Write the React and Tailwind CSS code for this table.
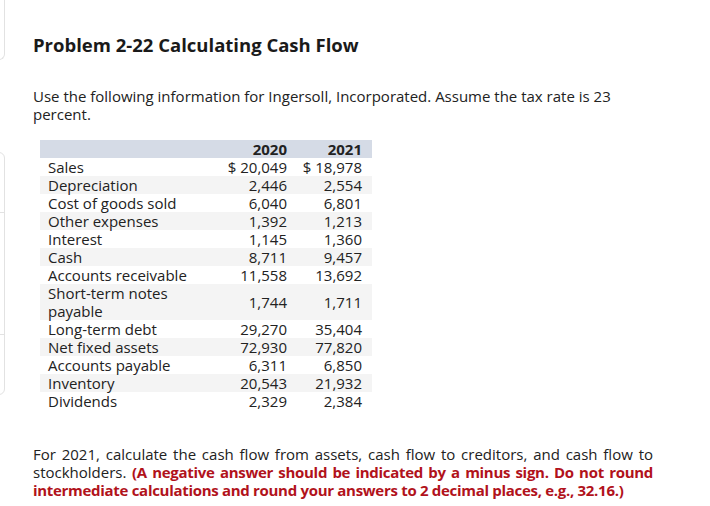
const rows = [
  ["Sales", "$ 20,049", "$ 18,978"],
  ["Depreciation", "2,446", "2,554"],
  ["Cost of goods sold", "6,040", "6,801"],
  ["Other expenses", "1,392", "1,213"],
  ["Interest", "1,145", "1,360"],
  ["Cash", "8,711", "9,457"],
  ["Accounts receivable", "11,558", "13,692"],
  ["Short-term notes payable", "1,744", "1,711"],
  ["Long-term debt", "29,270", "35,404"],
  ["Net fixed assets", "72,930", "77,820"],
  ["Accounts payable", "6,311", "6,850"],
  ["Inventory", "20,543", "21,932"],
  ["Dividends", "2,329", "2,384"],
];

function SideCards() {
  return (
    <div className="absolute left-[-200px] top-0 w-[205px]">
      <div className="h-[60px] rounded-b-md border border-t-0 border-[#e2e2e2]" />
      <div className="mt-[92px] rounded-md border border-[#e2e2e2]">
        <div className="h-[60px] border-b border-[#e2e2e2]" />
        <div className="h-[122px] border-b border-[#e2e2e2]" />
        <div className="h-[59px]" />
      </div>
    </div>
  );
}

export default function App() {
  return (
    <div
      className="relative min-h-[506px] w-[710px] overflow-hidden bg-white text-[#222]"
      style={{ fontFamily: "'Open Sans', 'Liberation Sans', sans-serif" }}
    >
      <SideCards />
      <div className="pl-[33px] pt-[33px]">
        <h1 className="text-[18.5px] font-bold leading-6 text-[#1a1a1a]">
          Problem 2-22 Calculating Cash Flow
        </h1>

        <p className="mt-[30px] w-[620px] text-[15px] leading-[18px]">
          Use the following information for Ingersoll, Incorporated. Assume the tax rate is 23
          percent.
        </p>

        <table className="mt-[17px] ml-[7px] w-[332px] table-fixed border-collapse text-[15px] leading-[18px]">
          <colgroup>
            <col className="w-[160px]" />
            <col className="w-[92px]" />
            <col className="w-[80px]" />
          </colgroup>
          <thead>
            <tr className="bg-[#d5dbe6]">
              <th />
              <th className="pr-[5px] text-right font-bold">2020</th>
              <th className="pr-[10px] text-right font-bold">2021</th>
            </tr>
          </thead>
          <tbody>
            {rows.map((r, i) => (
              <tr key={r[0]} className={i % 2 === 1 ? "bg-[#f4f4f4]" : "bg-white"}>
                <td className="pl-[8px] pr-[12px] align-top">{r[0]}</td>
                <td className="whitespace-nowrap pr-[5px] text-right align-middle">{r[1]}</td>
                <td className="whitespace-nowrap pr-[10px] text-right align-middle">{r[2]}</td>
              </tr>
            ))}
          </tbody>
        </table>

        <p className="mt-[35px] w-[620px] text-justify text-[15px] leading-[18px]">
          For 2021, calculate the cash flow from assets, cash flow to creditors, and cash flow to
          stockholders.{" "}
          <strong className="font-bold tracking-[-0.3px] text-[#b1121b]">
            (A negative answer should be indicated by a minus sign. Do not round intermediate
            calculations and round your answers to 2 decimal places, e.g., 32.16.)
          </strong>
        </p>
      </div>
    </div>
  );
}
